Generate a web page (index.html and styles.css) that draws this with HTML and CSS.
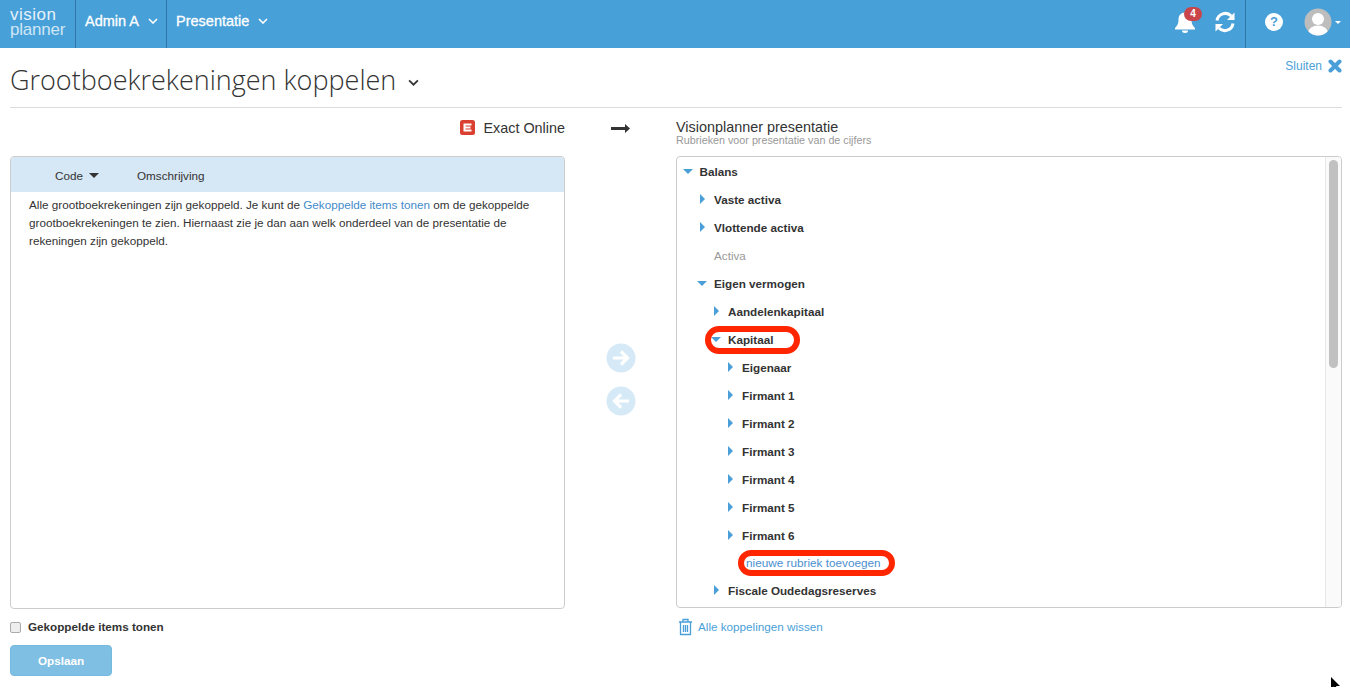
FILE: index.html
```html
<!DOCTYPE html>
<html lang="nl">
<head>
<meta charset="utf-8">
<title>Grootboekrekeningen koppelen</title>
<link rel="stylesheet" href="styles.css">
</head>
<body>
<header class="nav">
  <div class="logo"><span class="logo-top">vision</span><span class="logo-bot">planner</span></div>
  <div class="nav-item nav-admin">Admin A <svg class="chev" viewBox="0 0 10 6"><path d="M1 1l4 4 4-4" fill="none" stroke="#fff" stroke-width="1.6"/></svg></div>
  <div class="nav-item nav-pres">Presentatie <svg class="chev" viewBox="0 0 10 6"><path d="M1 1l4 4 4-4" fill="none" stroke="#fff" stroke-width="1.6"/></svg></div>
  <div class="nav-right">
    <div class="bell">
      <svg width="22" height="24" viewBox="0 0 22 24"><path d="M11 2.500c-4 0-6.500 3-6.500 7 0 4.500-1.500 6.500-3.500 8.500v1.500h20V18c-2-2-3.500-4-3.500-8.500 0-4-2.500-7-6.500-7z" fill="#fff"/><path d="M8 20.500a3 2.500 0 0 0 6 0z" fill="#fff"/></svg>
      <span class="badge">4</span>
    </div>
    <svg class="sync" width="22" height="22" viewBox="0 0 22 22"><path d="M3 9.500A8.300 8.300 0 0 1 17.200 5" fill="none" stroke="#fff" stroke-width="3"/><path d="M20.500 1.500v7.500h-7.500z" fill="#fff"/><path d="M19 12.500A8.300 8.300 0 0 1 4.800 17" fill="none" stroke="#fff" stroke-width="3"/><path d="M1.500 20.500V13h7.500z" fill="#fff"/></svg>
    <div class="help-cell"><span class="help">?</span></div>
    <svg class="avatar" width="28" height="28" viewBox="0 0 28 28"><defs><clipPath id="av"><circle cx="14" cy="14" r="13.500"/></clipPath></defs><circle cx="14" cy="14" r="13.500" fill="#bdbdbd"/><g clip-path="url(#av)" fill="#fff"><circle cx="14" cy="11" r="6"/><ellipse cx="14" cy="25" rx="10" ry="7.500"/></g></svg>
    <span class="caret-w"></span>
  </div>
</header>

<main class="page">
  <div class="title-row">
    <h1>Grootboekrekeningen koppelen <svg class="title-chev" viewBox="0 0 10 6"><path d="M1 1l4 4 4-4" fill="none" stroke="#333" stroke-width="1.600"/></svg></h1>
    <a class="close">Sluiten <svg width="14" height="14" viewBox="0 0 14 14"><path d="M2.500 2.500l9 9M11.500 2.500l-9 9" stroke="#4a9fd8" stroke-width="4" stroke-linecap="round"/></svg></a>
  </div>

  <div class="grid">
    <div class="col-head left-head">
      <svg class="exact" width="15" height="15" viewBox="0 0 15 15"><rect width="15" height="15" rx="2.500" fill="#d9402f"/><path d="M3.500 3.500h8v2h-6v1h5v2h-5v1h6v2h-8z" fill="#fff"/></svg>
      <span>Exact Online</span>
    </div>
    <div class="arrow-head"><svg width="19" height="9" viewBox="0 0 19 9"><path d="M0 3h14V0l5 4.500-5 4.500V6H0z" fill="#333"/></svg></div>
    <div class="col-head right-head">
      <div class="rh-title">Visionplanner presentatie</div>
      <div class="rh-sub">Rubrieken voor presentatie van de cijfers</div>
    </div>

    <section class="panel left-panel">
      <div class="thead"><span class="th-code">Code <i class="caret-d"></i></span><span class="th-desc">Omschrijving</span></div>
      <p class="msg">Alle grootboekrekeningen zijn gekoppeld. Je kunt de <a>Gekoppelde items tonen</a> om de gekoppelde grootboekrekeningen te zien. Hiernaast zie je dan aan welk onderdeel van de presentatie de rekeningen zijn gekoppeld.</p>
    </section>

    <div class="mid">
      <svg width="30" height="30" viewBox="0 0 30 30"><circle cx="15" cy="15" r="14.500" fill="#d6e9f6"/><path d="M7 15h14M15 8.500l6.500 6.500-6.500 6.500" fill="none" stroke="#fff" stroke-width="3.200"/></svg>
      <svg width="30" height="30" viewBox="0 0 30 30"><circle cx="15" cy="15" r="14.500" fill="#d6e9f6"/><path d="M23 15H9M15 8.500L8.500 15l6.500 6.500" fill="none" stroke="#fff" stroke-width="3.200"/></svg>
    </div>

    <section class="panel right-panel">
      <ul class="tree">
        <li class="row l0"><i class="tri-d"></i>Balans</li>
        <li class="row l1"><i class="tri-r"></i>Vaste activa</li>
        <li class="row l1"><i class="tri-r"></i>Vlottende activa</li>
        <li class="row l1 muted">Activa</li>
        <li class="row l1"><i class="tri-d"></i>Eigen vermogen</li>
        <li class="row l2"><i class="tri-r"></i>Aandelenkapitaal</li>
        <li class="row l2"><i class="tri-d"></i>Kapitaal<span class="ring ring-a"></span></li>
        <li class="row l3"><i class="tri-r"></i>Eigenaar</li>
        <li class="row l3"><i class="tri-r"></i>Firmant 1</li>
        <li class="row l3"><i class="tri-r"></i>Firmant 2</li>
        <li class="row l3"><i class="tri-r"></i>Firmant 3</li>
        <li class="row l3"><i class="tri-r"></i>Firmant 4</li>
        <li class="row l3"><i class="tri-r"></i>Firmant 5</li>
        <li class="row l3"><i class="tri-r"></i>Firmant 6</li>
        <li class="row l3 add"><a>nieuwe rubriek toevoegen</a><span class="ring ring-b"></span></li>
        <li class="row l2"><i class="tri-r"></i>Fiscale Oudedagsreserves</li>
      </ul>
      <div class="scroll"><div class="thumb"></div></div>
    </section>

    <div class="left-foot">
      <label class="check"><span class="box"></span>Gekoppelde items tonen</label>
      <button class="save">Opslaan</button>
    </div>
    <div></div>
    <a class="wipe"><svg width="15" height="18" viewBox="0 0 15 18"><path d="M1 4h13M5 4V1.500h5V4M2.500 4v12.500h10V4M5.500 7v7M7.500 7v7M9.500 7v7" fill="none" stroke="#4a9fd8" stroke-width="1.300"/></svg>Alle koppelingen wissen</a>
  </div>
</main>
<svg class="cursor" width="10" height="14" viewBox="0 0 10 14"><path d="M0 0v12l3-2.500L5 14l2-1-2-4h4z" fill="#000"/></svg>
</body>
</html>
```
FILE: styles.css
```css
* { box-sizing: border-box; }
html, body { margin: 0; height: 687px; overflow: hidden; }
body { font-family: "Liberation Sans", Arial, sans-serif; font-size: 11.7px; color: #333; background: #fff; position: relative; }
a { color: #428bca; }

.nav { height: 48px; background: #48a0d8; color: #fff; display: flex; align-items: stretch; }
.logo { width: 76px; border-right: 1px solid #2f75a5; padding: 7px 0 0 10px; display: flex; flex-direction: column; font-size: 17px; line-height: 15px; color: #e6f2fa; }
.logo-top { letter-spacing: 0.5px; }
.logo-bot { color: #cfe6f5; letter-spacing: -0.2px; }
.nav-item { display: flex; align-items: center; font-size: 14.5px; -webkit-text-stroke: 0.3px #fff; padding: 0 0 7px 9px; }
.nav-admin { width: 91px; border-right: 1px solid #2f75a5; }
.chev { width: 10px; height: 6px; margin-left: 9px; }
.nav-right { margin-left: auto; display: flex; align-items: center; padding-right: 9px; }
.bell { position: relative; width: 22px; height: 24px; margin: 0 18px 4px 0; }
.badge { position: absolute; left: 10px; top: -3px; width: 18px; height: 14px; border-radius: 7px; background: #c9454a; color: #fff; font-size: 10px; font-weight: 700; line-height: 14px; text-align: center; }
.sync { margin: 0 9px 4px 0; }
.help-cell { height: 48px; border-left: 1px solid #2f75a5; display: flex; align-items: center; padding: 0 0 4px 19px; margin-right: 21px; }
.help { width: 18px; height: 18px; border-radius: 50%; background: #fff; color: #48a0d8; font-size: 13px; font-weight: 700; line-height: 18px; text-align: center; }
.avatar { margin-bottom: 4px; }
.caret-w { width: 0; height: 0; border-left: 3px solid transparent; border-right: 3px solid transparent; border-top: 3px solid #fff; margin: 0 0 4px 3px; }

.page { padding: 0 8px 0 10px; }
.title-row { height: 60px; border-bottom: 1px solid #ddd; display: flex; justify-content: space-between; }
h1 { margin: 0; padding-top: 14px; font-family: "Open Sans", sans-serif; font-weight: 300; font-size: 27px; line-height: 36px; color: #333; }
.title-chev { width: 11px; height: 7px; margin-left: 5px; vertical-align: middle; }
.close { display: flex; align-items: flex-start; gap: 6px; padding-top: 11px; color: #4a9fd8; font-size: 12px; line-height: 14px; }

.grid { display: grid; grid-template-columns: 555px 111px 666px; grid-template-rows: 48px 453px auto; }
.col-head { font-size: 14.4px; }
.left-head { display: flex; justify-content: flex-end; align-items: flex-start; padding-top: 12px; gap: 8px; line-height: 17px; }
.arrow-head { display: flex; justify-content: center; align-items: flex-start; padding-top: 16px; }
.rh-title { padding-top: 11px; line-height: 16px; }
.rh-sub { font-size: 10.750px; line-height: 10px; color: #999; }

.panel { border: 1px solid #ccc; border-radius: 4px; overflow: hidden; }
.left-panel { height: 453px; }
.thead { height: 35px; background: #d6e7f5; display: flex; align-items: center; padding-top: 1px; }
.th-code { margin-left: 44px; width: 82px; }
.caret-d { display: inline-block; width: 0; height: 0; border-left: 5px solid transparent; border-right: 5px solid transparent; border-top: 5px solid #333; margin-left: 3px; vertical-align: 2px; }
.msg { margin: 0; padding: 4px 18px; line-height: 18px; }

.mid { display: flex; flex-direction: column; align-items: center; gap: 13px; padding-top: 187px; }

.right-panel { height: 452px; position: relative; }
.tree { list-style: none; margin: 0; padding: 1px 0 0; }
.row { height: 28px; line-height: 28px; font-weight: 700; position: relative; white-space: nowrap; color: #333; }
.l0 { padding-left: 22.500px; }
.l1 { padding-left: 37px; }
.l2 { padding-left: 51px; }
.l3 { padding-left: 65px; }
.row.muted { font-weight: 400; color: #999; }
.add { font-weight: 400; padding-left: 69px; height: 27px; line-height: 25px; font-size: 11.750px; }
.add a { color: #4a8fd0; }
.tri-d, .tri-r { position: relative; display: inline-block; width: 0; height: 0; }
.tri-d { border-left: 5px solid transparent; border-right: 5px solid transparent; border-top: 5px solid #4a9fd8; margin-left: -17px; margin-right: 7px; top: -2px; }
.tri-r { border-top: 5px solid transparent; border-bottom: 5px solid transparent; border-left: 5px solid #4a9fd8; margin-left: -14px; margin-right: 9px; }
.ring { position: absolute; border: 6px solid #ff2600; pointer-events: none; }
.ring-a { left: 28px; top: 0; width: 95px; height: 28px; border-radius: 14px; }
.ring-b { left: 61px; top: 0; width: 157px; height: 26px; border-radius: 13px; }
.scroll { position: absolute; right: 0; top: 0; bottom: 0; width: 16px; background: #fafafa; border-left: 1px solid #e8e8e8; padding: 3px 3px 0; }
.thumb { width: 9px; height: 208px; background: #c1c1c1; border-radius: 5px; }

.left-foot { padding-top: 11px; }
.check { display: flex; align-items: center; font-weight: 700; line-height: 14px; }
.box { width: 11px; height: 11px; border: 1px solid #aaa; border-radius: 2px; background: #eee; margin-right: 7px; }
.save { display: block; margin-top: 11px; width: 102px; height: 31px; border: 1px solid #74b9e0; border-radius: 4px; background: #7fbfe4; color: #fff; font-family: inherit; font-size: 11.700px; font-weight: 700; padding: 0; }
.wipe { display: flex; align-items: center; gap: 5px; padding: 8px 0 0 2px; height: 27px; color: #4a9fd8; }
.cursor { position: absolute; left: 1331px; top: 677px; }
```
